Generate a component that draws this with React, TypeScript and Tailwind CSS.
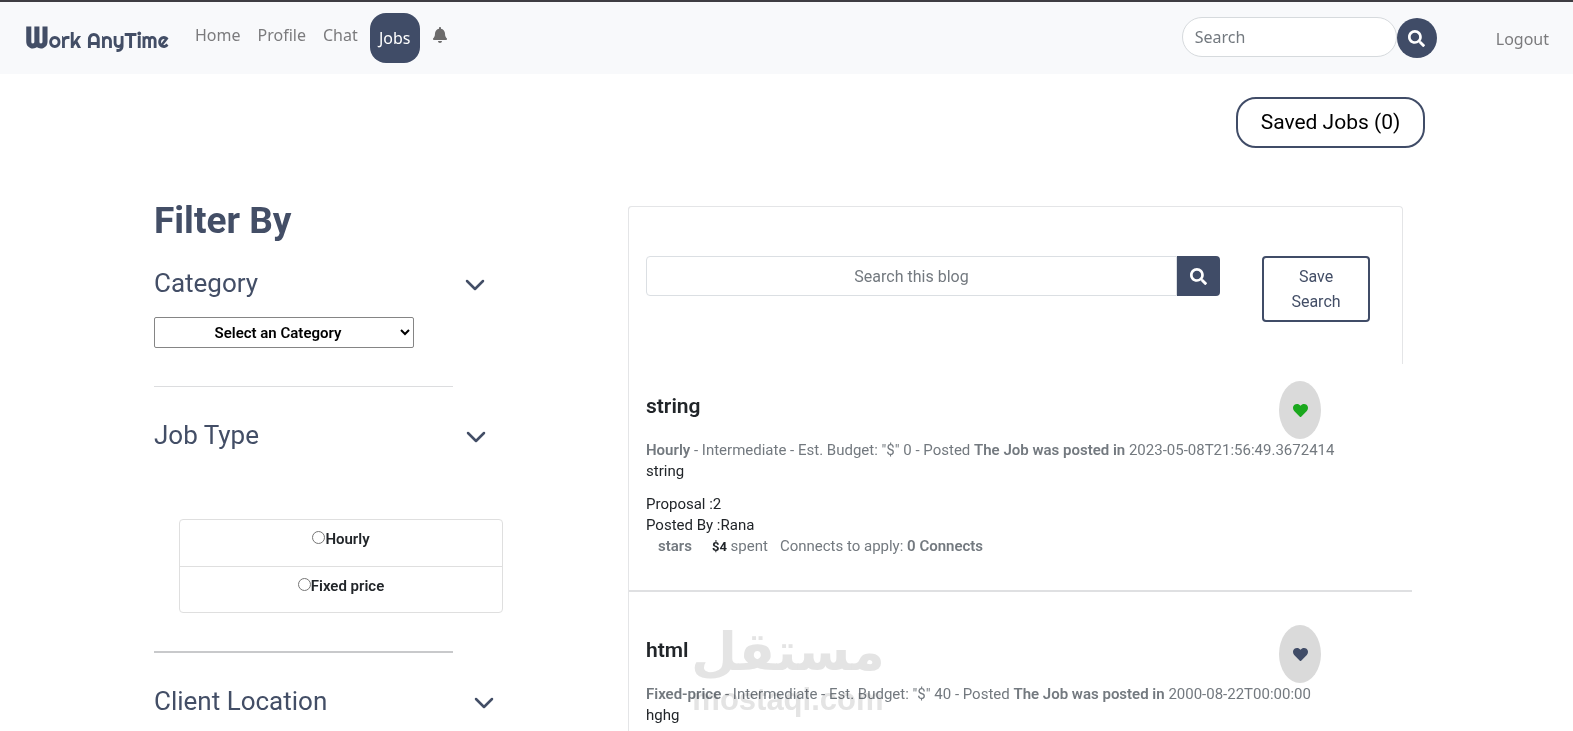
import { FaBell, FaHeart, FaSearch } from "react-icons/fa";

type Job = {
  title: string;
  type: string;
  budget: number;
  posted: string;
  description: string;
  saved: boolean;
  details?: { proposals: number; author: string; spent: string; connects: number };
};

const jobs: Job[] = [
  {
    title: "string",
    type: "Hourly",
    budget: 0,
    posted: "2023-05-08T21:56:49.3672414",
    description: "string",
    saved: true,
    details: { proposals: 2, author: "Rana", spent: "$4", connects: 0 },
  },
  {
    title: "html",
    type: "Fixed-price",
    budget: 40,
    posted: "2000-08-22T00:00:00",
    description: "hghg",
    saved: false,
  },
];

function Chevron() {
  return (
    <svg width="20" height="12" viewBox="0 0 20 12" fill="none" stroke="#434e66" strokeWidth="2.5" strokeLinecap="round" strokeLinejoin="round" aria-hidden="true">
      <path d="M2 2l8 8 8-8" />
    </svg>
  );
}

function SectionHeader({ title, width }: { title: string; width: string }) {
  return (
    <button type="button" className={`flex h-10 items-center justify-between text-left ${width}`}>
      <span className="text-[26px] leading-[38px]">{title}</span>
      <span className="pt-1">
        <Chevron />
      </span>
    </button>
  );
}

function Header() {
  return (
    <header className="flex h-[74px] items-start border-t-2 border-[#3e3d42] bg-[#f8f9fb] pr-6 pl-[25px] font-['Noto_Sans',sans-serif] text-[#7b7b7d]">
      <a href="#" className="flex h-[72px] w-[145px] items-center font-[Righteous,Lato,sans-serif] text-[21px] leading-8 font-normal whitespace-nowrap text-[#434e66]">
        <span>
          <span className="text-[29px] font-bold">W</span>ork AnyTime
        </span>
      </a>
      <nav className="ml-[25px] flex text-base leading-6">
        <a href="#" className="pt-[21px]">Home</a>
        <a href="#" className="ml-[17px] pt-[21px]">Profile</a>
        <a href="#" className="ml-[17px] pt-[21px]">Chat</a>
        <a href="#" className="mt-[11px] ml-3 flex h-[50px] w-[50px] items-center justify-center rounded-2xl bg-[#404c67] text-white">Jobs</a>
        <a href="#" aria-label="Notifications" className="ml-3 pt-[25px] text-[#6c6b6b]">
          <FaBell size={16} />
        </a>
      </nav>
      <form className="mt-[15px] ml-auto flex">
        <input aria-label="Search" placeholder="Search" className="h-10 w-[215px] rounded-full border border-[#d6dadd] bg-white px-3 text-base outline-none placeholder:text-[#73797f]" />
        <button type="button" aria-label="Search" className="mt-px flex size-10 items-center justify-center rounded-full bg-[#404c67] text-white">
          <FaSearch size={17} />
        </button>
      </form>
      <a href="#" className="mt-[25px] ml-[59px] text-base leading-6">Logout</a>
    </header>
  );
}

function Filters() {
  return (
    <aside className="w-[349px] shrink-0 text-[#434e66]">
      <h1 className="text-[37px] leading-[46px] font-bold">Filter By</h1>
      <div className="mt-[19px]">
        <SectionHeader title="Category" width="w-[331px]" />
      </div>
      <select aria-label="Category" className="mt-[14px] block h-[31px] w-[260px] rounded-[2px] border border-[#858585] bg-white text-center text-[15px] font-semibold text-black">
        <option>Select an Category</option>
      </select>
      <hr className="mt-[38px] w-[299px] border-[#dcdddf]" />
      <div className="mt-7">
        <SectionHeader title="Job Type" width="w-[332px]" />
      </div>
      <fieldset className="mt-16 ml-[25px] rounded border border-[#dfdfdf] text-[15px] leading-6 font-semibold text-[#212529]">
        <label className="flex h-[46px] justify-center pt-[7px]">
          <input type="radio" name="job-type" className="mt-[4px] size-[13px]" />
          Hourly
        </label>
        <label className="flex h-[46px] justify-center border-t border-[#dfdfdf] pt-[7px]">
          <input type="radio" name="job-type" className="mt-[4px] size-[13px]" />
          Fixed price
        </label>
      </fieldset>
      <hr className="mt-[38px] w-[299px] border-t-2 border-[#c8c9cb]" />
      <div className="mt-7">
        <SectionHeader title="Client Location" width="w-[340px]" />
      </div>
    </aside>
  );
}

function JobCard({ job }: { job: Job }) {
  return (
    <article className="pl-[17px] text-[15px] leading-[21px] text-[#212529]">
      <div className="flex items-start justify-between pr-[91px]">
        <h2 className="pt-[11px] text-[21px] leading-7 font-semibold">{job.title}</h2>
        <button type="button" aria-label={`Save ${job.title}`} className={`flex h-[58px] w-[42px] items-center justify-center rounded-[50%] bg-[#dadada] ${job.saved ? "text-[#1aa81d]" : "text-[#404c67]"}`}>
          <FaHeart size={15} />
        </button>
      </div>
      <p className="leading-[22px] text-[#73797f]">
        <b className="font-semibold">{job.type}</b> - Intermediate - Est. Budget: "$" {job.budget} - Posted{" "}
        <b className="font-semibold">The Job was posted in</b> {job.posted}
      </p>
      <p>{job.description}</p>
      {job.details && (
        <div className="mt-3">
          <p>Proposal :{job.details.proposals}</p>
          <p>Posted By :{job.details.author}</p>
          <p className="flex pl-3 text-[#73797f]">
            <b className="font-semibold">stars</b>
            <span className="ml-5">
              <b className="text-[13px] font-bold text-[#212529]">{job.details.spent}</b> spent
            </span>
            <span className="ml-3">
              Connects to apply: <b className="font-semibold">{job.details.connects} Connects</b>
            </span>
          </p>
        </div>
      )}
    </article>
  );
}

function Watermark() {
  return (
    <div aria-hidden="true" className="pointer-events-none absolute bottom-[13px] left-[62px] flex flex-col items-center leading-none font-bold text-[#e4e4e4] mix-blend-multiply">
      <span lang="ar" dir="rtl" className="font-['DejaVu_Sans',sans-serif] text-[53px] leading-[60px]">مستقل</span>
      <span className="font-['Liberation_Sans',sans-serif] text-[31px] leading-9">mostaql.com</span>
    </div>
  );
}

export default function App() {
  return (
    <div className="min-h-screen bg-white font-[Roboto,sans-serif]">
      <Header />
      <div className="flex justify-end pt-[23px] pr-[148px]">
        <button type="button" className="h-[51px] w-[189px] rounded-[20px] border-2 border-[#404c67] text-[21px] text-black">
          Saved Jobs (0)
        </button>
      </div>
      <div className="flex items-stretch justify-between gap-8 pr-[161px] pl-[154px]">
        <div className="mt-[50px]">
          <Filters />
        </div>
        <main className="relative mt-[58px] w-[784px] rounded-tl border-l border-[#e4e5e7]">
          <section className="-ml-px flex h-[158px] w-[775px] items-start rounded-t border border-b-0 border-[#e4e5e7] pt-[49px] pr-8 pl-[17px]">
            <form className="flex flex-1">
              <input aria-label="Search this blog" placeholder="Search this blog" className="h-10 min-w-0 flex-1 rounded-l border border-[#dbdfe3] text-center text-base outline-none placeholder:text-[#73797f]" />
              <button type="button" aria-label="Search" className="flex h-10 w-[43px] items-center justify-center rounded-r bg-[#404c67] text-white">
                <FaSearch size={17} />
              </button>
            </form>
            <button type="button" className="ml-[42px] h-[66px] w-[108px] rounded border-2 border-[#404c67] px-4 text-base leading-[25px] text-[#434e66]">
              Save Search
            </button>
          </section>
          <div className="pt-[17px] pb-[5px]">
            <JobCard job={jobs[0]} />
            <hr className="mt-[33px] mb-[33px] border-t-2 border-[#dfe0e2]" />
            <JobCard job={jobs[1]} />
          </div>
          <Watermark />
        </main>
      </div>
    </div>
  );
}
